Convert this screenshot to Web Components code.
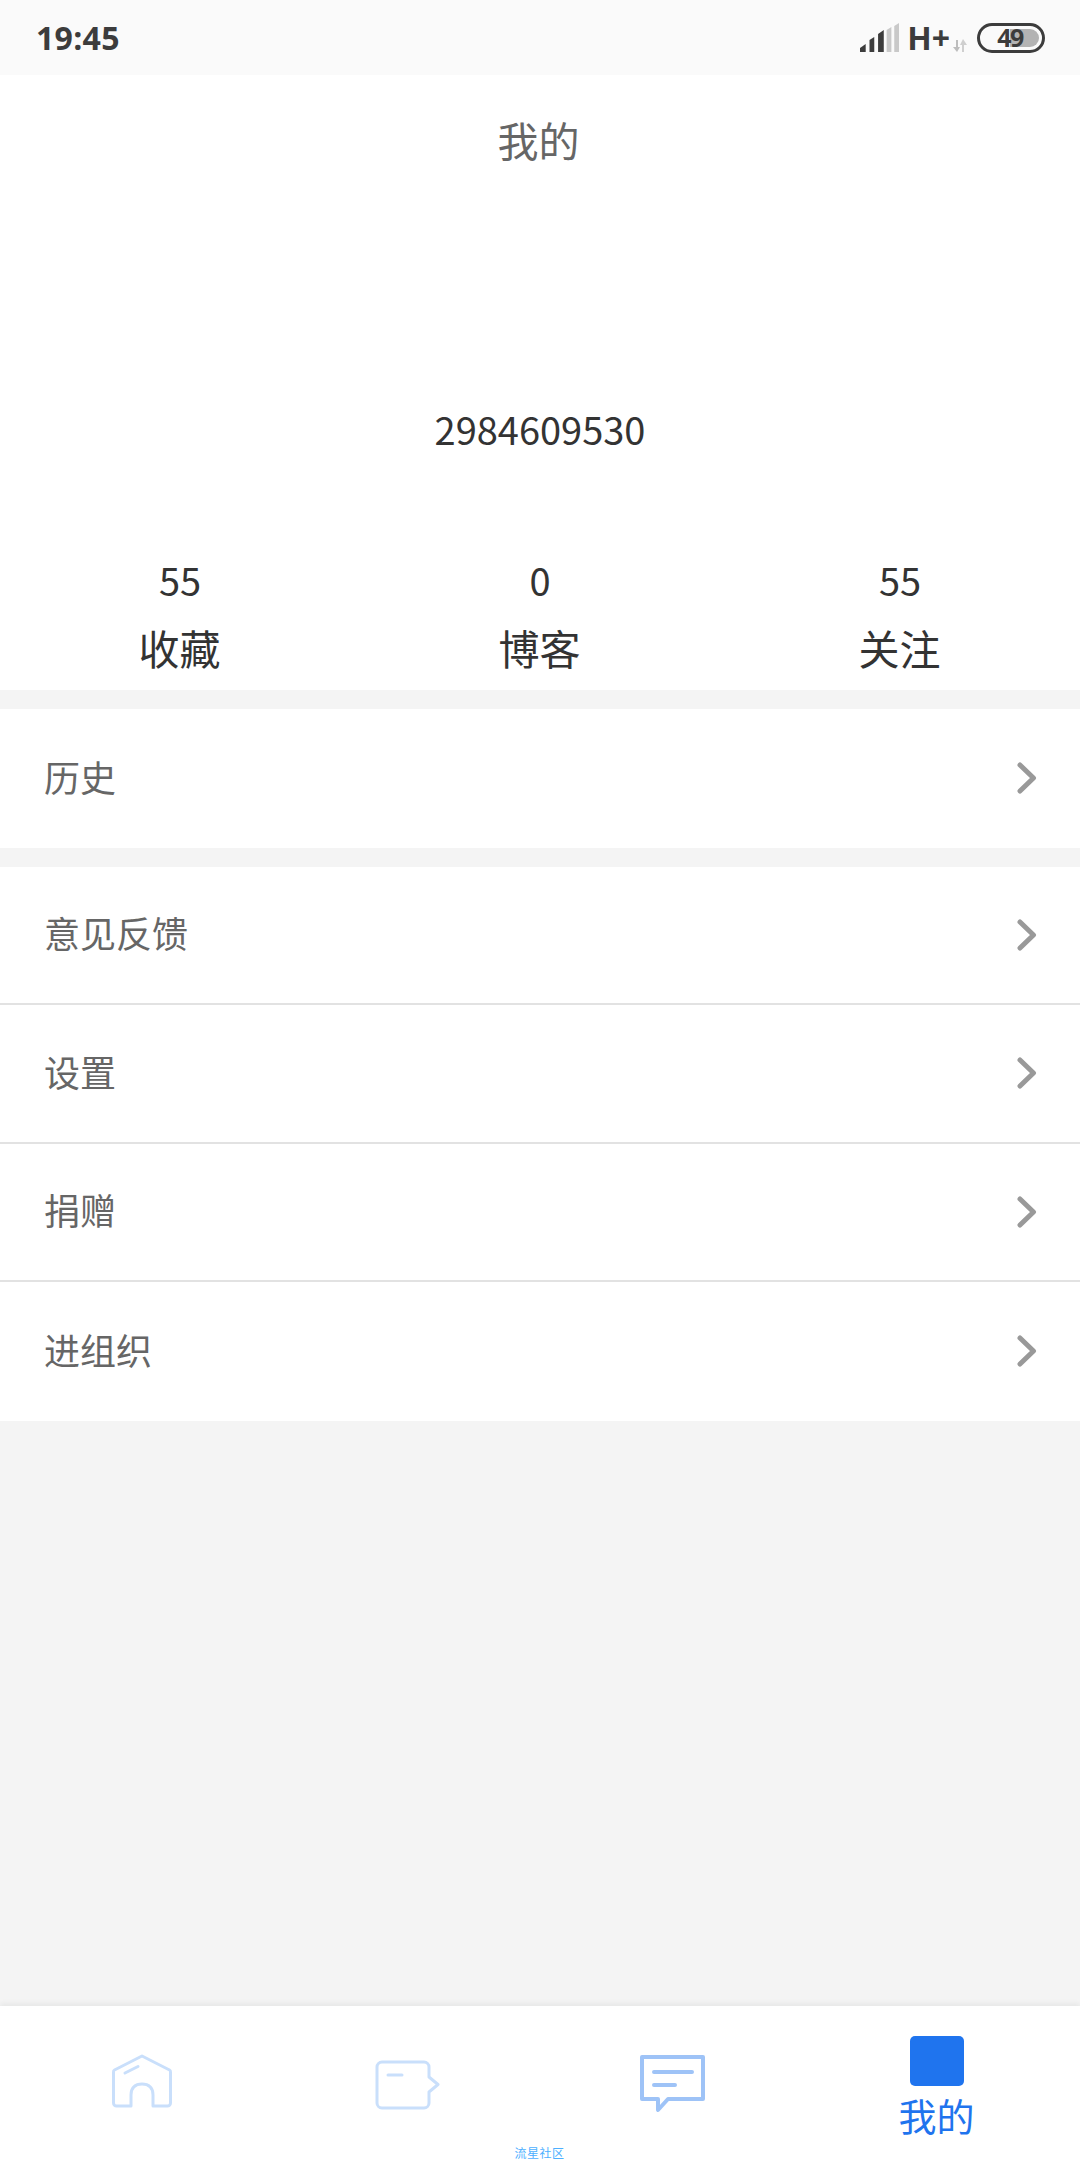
<!DOCTYPE html>
<html lang="zh"><head><meta charset="utf-8"><title>我的</title>
<style>
html,body{margin:0;padding:0;height:2160px;overflow:hidden}
body{font-family:"Noto Sans CJK SC","Noto Sans",sans-serif;background:#f4f4f4}
my-app{display:flex;flex-direction:column;height:2160px}
</style></head><body>
<my-app>
  <status-bar></status-bar>
  <profile-head name="2984609530">
    <stat-item value="55" label="收藏"></stat-item>
    <stat-item value="0" label="博客"></stat-item>
    <stat-item value="55" label="关注"></stat-item>
  </profile-head>
  <menu-group><menu-row label="历史" last></menu-row></menu-group>
  <menu-group>
    <menu-row label="意见反馈"></menu-row>
    <menu-row label="设置"></menu-row>
    <menu-row label="捐赠"></menu-row>
    <menu-row label="进组织" last></menu-row>
  </menu-group>
  <tab-bar></tab-bar>
</my-app>
<script>
function def(name,html){
  customElements.define(name,class extends HTMLElement{
    connectedCallback(){
      if(this.shadowRoot)return;
      const r=this.attachShadow({mode:'open'});
      r.innerHTML=typeof html==='function'?html(this):html;
    }
  });
}
def('status-bar',`<style>
:host{display:flex;align-items:center;justify-content:space-between;height:75px;background:#fafafa;padding:0 35px 0 36px;box-sizing:border-box;flex:none;color:#3c3c3c}
.t{font:700 32px/1 "Open Sans",sans-serif;letter-spacing:.3px}
.r{display:flex;align-items:center;height:75px}
.h{font:700 32px/1 "Open Sans",sans-serif;margin-left:8px}
.bat{position:relative;width:68px;height:30px;box-sizing:border-box;border:3.500px solid #3c3c3c;border-radius:15px;margin-left:10px;display:flex;align-items:center;justify-content:center}
.fill{position:absolute;left:30px;right:3px;top:3px;bottom:3px;background:#b3b3b3;border-radius:0 9px 9px 0}
.n{position:relative;font:700 25px/23px "Open Sans",sans-serif;letter-spacing:-1.500px;margin-left:-2px}
svg{display:block}
</style>
<span class="t">19:45</span>
<div class="r">
<svg width="39" height="29" viewBox="0 0 41 29" preserveAspectRatio="none"><path d="M0 29v-4l6-4v8z" fill="#3c3c3c"/><path d="M10 29V17l5-3v15z" fill="#3c3c3c"/><path d="M19 29V11l6-4v22z" fill="#3c3c3c"/><path d="M28 29V7l5-3v25z" fill="#c9c9c9"/><path d="M36 29V3l5-3v29z" fill="#c9c9c9"/></svg>
<span class="h">H+</span>
<svg width="14" height="14" viewBox="0 0 14 14" style="margin:17px 0 0 3px"><path d="M4 1v8" stroke="#bdbdbd" stroke-width="2"/><path d="M0 8h7L4 13z" fill="#bdbdbd"/><path d="M10 13V5" stroke="#cfcfcf" stroke-width="2"/><path d="M7 6h7L10 0z" fill="#cfcfcf"/></svg>
<div class="bat"><div class="fill"></div><span class="n">49</span></div>
</div>`);
def('stat-item',h=>`<style>
:host{display:flex;flex-direction:column;align-items:center;color:#333}
.v{font:400 38px/50px "Noto Sans CJK SC",sans-serif;height:50px}
.l{font:400 41px/60px "Noto Sans CJK SC",sans-serif;height:60px;margin-top:12px;padding-right:1px}
</style><div class="v">${h.getAttribute('value')}</div><div class="l">${h.getAttribute('label')}</div>`);
def('profile-head',h=>`<style>
:host{display:block;background:#fff;height:615px;flex:none}
.title{height:128px;display:flex;align-items:center;justify-content:center;font:400 41px/1 "Noto Sans CJK SC",sans-serif;color:#666;padding-right:3px}
.name{margin-top:194px;height:64px;text-align:center;font:400 38px/64px "Noto Sans CJK SC",sans-serif;color:#333}
.stats{display:grid;grid-template-columns:repeat(3,1fr);margin-top:94px}
</style><div class="title">我的</div><div class="name">${h.getAttribute('name')}</div><div class="stats"><slot></slot></div>`);
def('menu-group',`<style>:host{display:block;background:#fff;margin-top:19px;flex:none}</style><slot></slot>`);
def('menu-row',h=>`<style>
:host{display:flex;align-items:center;justify-content:space-between;height:138.500px;box-sizing:border-box;padding:0 43px 0 44px;background:#fff;${h.hasAttribute('last')?'':'border-bottom:2px solid #e2e2e2;'}}
span{font:400 36px/1 "Noto Sans CJK SC",sans-serif;color:#666;padding-bottom:5px}
</style><span>${h.getAttribute('label')}</span><svg width="20" height="32" viewBox="0 0 20 32"><path d="M3 3L16.500 16L3 29" fill="none" stroke="#999" stroke-width="5" stroke-linecap="round" stroke-linejoin="round"/></svg>`);
def('tab-bar',`<style>
:host{display:flex;flex-direction:column;height:154px;margin-top:auto;background:#fff;box-shadow:0 -3px 5px rgba(0,0,0,.05);flex:none;overflow:hidden}
.tabs{display:grid;grid-template-columns:repeat(4,265px);padding-left:9px;height:140px}
.tab{display:flex;flex-direction:column;align-items:center;padding-top:48px;box-sizing:border-box}
svg{display:block}
.me{padding-top:30px}
.sq{width:54px;height:50px;background:#1f74ee;border-radius:5px}
.me span{font:400 38px/50px "Noto Sans CJK SC",sans-serif;color:#1f74ee;margin-top:4px}
.cap{height:14px;text-align:center;font:400 12px/14px "Noto Sans CJK SC",sans-serif;letter-spacing:.5px;color:#4db0ff;padding-right:1px}
</style>
<div class="tabs">
<div class="tab"><svg width="62" height="54" viewBox="0 0 62 54" fill="none" stroke="#c9dffb" stroke-width="3" stroke-linejoin="round" stroke-linecap="round"><path d="M31 2L3.500 16a2 2 0 0 0-1 2V49a3 3 0 0 0 3 3H20V41C20 34 24 30 31 30S42 34 42 41V52H56.500a3 3 0 0 0 3-3V18a2 2 0 0 0-1-2z"/><path d="M14 19L27 12.500"/></svg></div>
<div class="tab" style="padding-top:54px"><svg width="66" height="50" viewBox="0 0 66 50" fill="none" stroke="#c9dffb" stroke-width="3" stroke-linejoin="round" stroke-linecap="round"><path d="M8 2H50a5 5 0 0 1 5 5V17L64 24.500L55 32V43a5 5 0 0 1-5 5H8a5 5 0 0 1-5-5V7a5 5 0 0 1 5-5z"/><path d="M14 15H28"/></svg></div>
<div class="tab"><svg width="66" height="60" viewBox="0 0 66 60" fill="none" stroke="#9ec3f7" stroke-width="4" stroke-linejoin="round" stroke-linecap="round"><path d="M3 3H64V45H29L19 56V45H3z"/><path d="M15 18H53M15 31H36"/></svg></div>
<div class="tab me"><div class="sq"></div><span>我的</span></div>
</div>
<div class="cap">流星社区</div>`);
</script>
</body></html>
